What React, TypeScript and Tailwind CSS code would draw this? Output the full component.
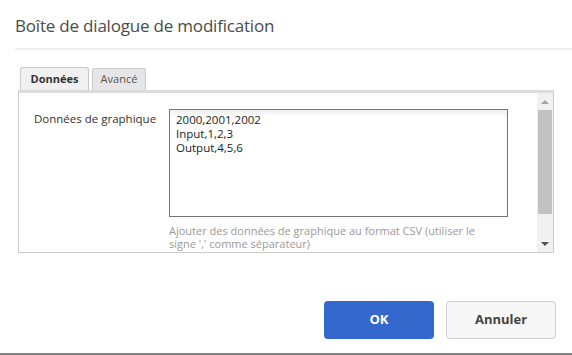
import React from 'react';

const App: React.FC = () => {
  return (
    <div className="w-[572px] h-[355px] bg-white relative overflow-hidden font-['Open_Sans',sans-serif] text-[#333]">
      {/* header */}
      <div className="pl-[15px] pt-[14px]">
        <h1 className="text-[17px] leading-[24px] text-[#4b4b4b] tracking-[-0.2px]">Boîte de dialogue de modification</h1>
        <div className="mt-[10px] h-[2px] bg-[#eeeeee]" />
      </div>

      {/* tabs */}
      <div className="ml-[18px] mt-[17px] w-[536px]">
        <div className="flex items-end gap-[3px] pl-[2px] h-[23px]">
          <div className="h-[23px] w-[69px] bg-[#f0f0f0] border border-b-0 border-[#c8c8c8] rounded-t-[3px] flex items-center justify-center text-[11px] font-bold text-[#333]">
            Données
          </div>
          <div className="h-[22px] w-[54px] bg-[#e6e6e6] border border-b-0 border-[#c8c8c8] rounded-t-[3px] flex items-center justify-center text-[11px] text-[#555]">
            Avancé
          </div>
        </div>

        {/* panel */}
        <div className="h-[163px] border border-[#cccccc] border-t-[3px] border-t-[#dcdcdc] flex">
          <div className="flex-1 flex pt-[16px] pl-[15px]">
            <div className="w-[135px] text-[11.5px] leading-[16px] text-[#333] pt-[2px]">Données de graphique</div>
            <div className="w-[339px]">
              <div className="h-[108px] border border-[#777] shadow-[inset_0_4px_4px_rgba(0,0,0,0.06)] px-[6px] pt-[3px] text-[11.5px] leading-[14px] text-[#222]">
                <div>2000,2001,2002</div>
                <div>Input,1,2,3</div>
                <div>Output,4,5,6</div>
              </div>
              <div className="mt-[7px] w-[325px] text-[11px] leading-[13px] text-[#9a9a9a]">
                Ajouter des données de graphique au format CSV (utiliser le signe ',' comme séparateur)
              </div>
            </div>
          </div>
          {/* scrollbar */}
          <div className="w-[16px] bg-[#f1f1f1] flex flex-col items-center">
            <div className="h-[17px] flex items-center justify-center">
              <div className="w-0 h-0 border-l-[4px] border-r-[4px] border-b-[4px] border-l-transparent border-r-transparent border-b-[#a3a3a3]" />
            </div>
            <div className="w-[14px] h-[104px] bg-[#c1c1c1]" />
            <div className="flex-1" />
            <div className="h-[17px] flex items-center justify-center">
              <div className="w-0 h-0 border-l-[4px] border-r-[4px] border-t-[4px] border-l-transparent border-r-transparent border-t-[#505050]" />
            </div>
          </div>
        </div>
      </div>

      {/* footer */}
      <div className="flex justify-end gap-[12px] pr-[16px] mt-[48px]">
        <button className="w-[110px] h-[38px] rounded-[4px] bg-[#3367cc] text-white text-[13px] font-bold">OK</button>
        <button className="w-[110px] h-[38px] rounded-[4px] bg-[#f7f7f7] border border-[#cfcfcf] text-[#444] text-[13px] font-bold">Annuler</button>
      </div>

      <div className="absolute left-0 right-0 bottom-0 h-[2px] bg-[#808080]" />
    </div>
  );
};

export default App;
